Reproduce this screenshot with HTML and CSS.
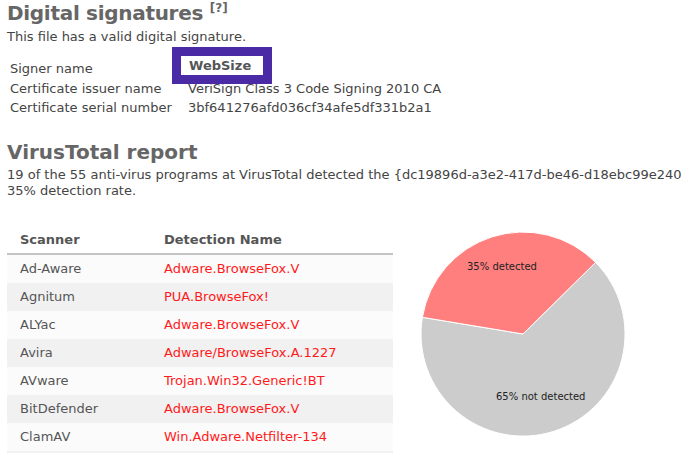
FILE: index.html
```html
<!DOCTYPE html>
<html>
<head>
<meta charset="utf-8">
<link rel="stylesheet" href="styles.css">
</head>
<body>
<div class="page">
  <section class="sig">
    <h2 class="heading">Digital signatures <sup class="help">[?]</sup></h2>
    <p class="lead">This file has a valid digital signature.</p>
    <div class="sig-table">
      <div class="sig-row"><span class="sig-label">Signer name</span><span class="sig-value strong">WebSize</span></div>
      <div class="sig-row"><span class="sig-label">Certificate issuer name</span><span class="sig-value">VeriSign Class 3 Code Signing 2010 CA</span></div>
      <div class="sig-row"><span class="sig-label">Certificate serial number</span><span class="sig-value">3bf641276afd036cf34afe5df331b2a1</span></div>
      <div class="highlight"><span class="highlight-inner">WebSize</span></div>
    </div>
  </section>

  <section class="vt">
    <h2 class="heading">VirusTotal report</h2>
    <p class="lead desc"><span class="line">19 of the 55 anti-virus programs at VirusTotal detected the {dc19896d-a3e2-417d-be46-d18ebc99e240} program, which is a</span><span class="line">35% detection rate.</span></p>

    <div class="report">
      <table class="scan-table">
        <thead>
          <tr><th class="col-scanner">Scanner</th><th>Detection Name</th></tr>
        </thead>
        <tbody>
          <tr><td>Ad-Aware</td><td class="det">Adware.BrowseFox.V</td></tr>
          <tr><td>Agnitum</td><td class="det">PUA.BrowseFox!</td></tr>
          <tr><td>ALYac</td><td class="det">Adware.BrowseFox.V</td></tr>
          <tr><td>Avira</td><td class="det">Adware/BrowseFox.A.1227</td></tr>
          <tr><td>AVware</td><td class="det">Trojan.Win32.Generic!BT</td></tr>
          <tr><td>BitDefender</td><td class="det">Adware.BrowseFox.V</td></tr>
          <tr><td>ClamAV</td><td class="det">Win.Adware.Netfilter-134</td></tr>
          <tr><td>Comodo</td><td class="det">Application.Win32.BrowseFox</td></tr>
        </tbody>
      </table>

      <svg class="pie" width="260" height="231" viewBox="0 0 260 231">
        <path d="M123,112 L195.6,40.4 A102,102 0 1 1 22.4,95.3 Z" fill="#cccccc" stroke="#ffffff" stroke-width="1"/>
        <path d="M123,112 L22.4,95.3 A102,102 0 0 1 195.6,40.4 Z" fill="#ff7f7f" stroke="#ffffff" stroke-width="1"/>
        <text x="67" y="48" class="pie-label">35% detected</text>
        <text x="96" y="178" class="pie-label">65% not detected</text>
      </svg>
    </div>
  </section>
</div>
</body>
</html>
```

FILE: styles.css
```css
html, body {
  margin: 0;
  padding: 0;
  background: #ffffff;
  overflow: hidden;
}

.page {
  padding: 0 0 0 7px;
  font-family: "DejaVu Sans", Verdana, sans-serif;
  font-size: 13px;
  color: #444;
  width: 1000px;
}

.heading {
  margin: 0;
  font-family: "DejaVu Sans", Verdana, sans-serif;
  font-weight: bold;
  font-size: 20px;
  line-height: 26px;
  color: #666;
}

.sig .heading {
  letter-spacing: -0.3px;
}

.help {
  font-size: 12px;
  letter-spacing: 0;
  vertical-align: 0;
  position: relative;
  top: -8px;
  color: #666;
}

.lead {
  margin: 0;
  line-height: 16px;
  color: #444;
}

.sig-table {
  position: relative;
  margin-top: 14px;
  padding-left: 3px;
}

.sig-row {
  display: flex;
  height: 19.5px;
  line-height: 19.5px;
  color: #444;
}

.sig-label {
  width: 178px;
  flex: none;
}

.strong {
  font-weight: bold;
}

.highlight {
  position: absolute;
  left: 165px;
  top: -12px;
  width: 82px;
  height: 19px;
  border: 9px solid #4b2aa6;
  background: #ffffff;
  display: flex;
  align-items: center;
}

.highlight-inner {
  padding-left: 8px;
  font-weight: bold;
  color: #555;
}

.vt {
  margin-top: 21px;
}

.desc {
  margin-top: 2px;
}

.desc .line {
  display: block;
  white-space: nowrap;
}

.report {
  display: flex;
  align-items: flex-start;
  margin-top: 27px;
}

.scan-table {
  width: 386px;
  border-collapse: collapse;
  flex: none;
}

.scan-table th {
  text-align: left;
  font-weight: bold;
  color: #555;
  height: 27px;
  padding: 0 0 0 13px;
  border-bottom: 2px solid #c4c4c4;
  vertical-align: middle;
}

.scan-table th.col-scanner,
.scan-table td:first-child {
  width: 131px;
}

.scan-table td {
  height: 28px;
  padding: 0 0 0 13px;
  color: #555;
  vertical-align: middle;
}

.scan-table tbody tr:nth-child(odd) {
  background: #fbfbfb;
}

.scan-table tbody tr:nth-child(even) {
  background: #f1f1f1;
}

.scan-table td.det {
  color: #ff1a1a;
}

.pie {
  margin-left: 7px;
  margin-top: -4px;
  flex: none;
}

.pie-label {
  font-family: "DejaVu Sans", Verdana, sans-serif;
  font-size: 10px;
  fill: #222;
}
```
